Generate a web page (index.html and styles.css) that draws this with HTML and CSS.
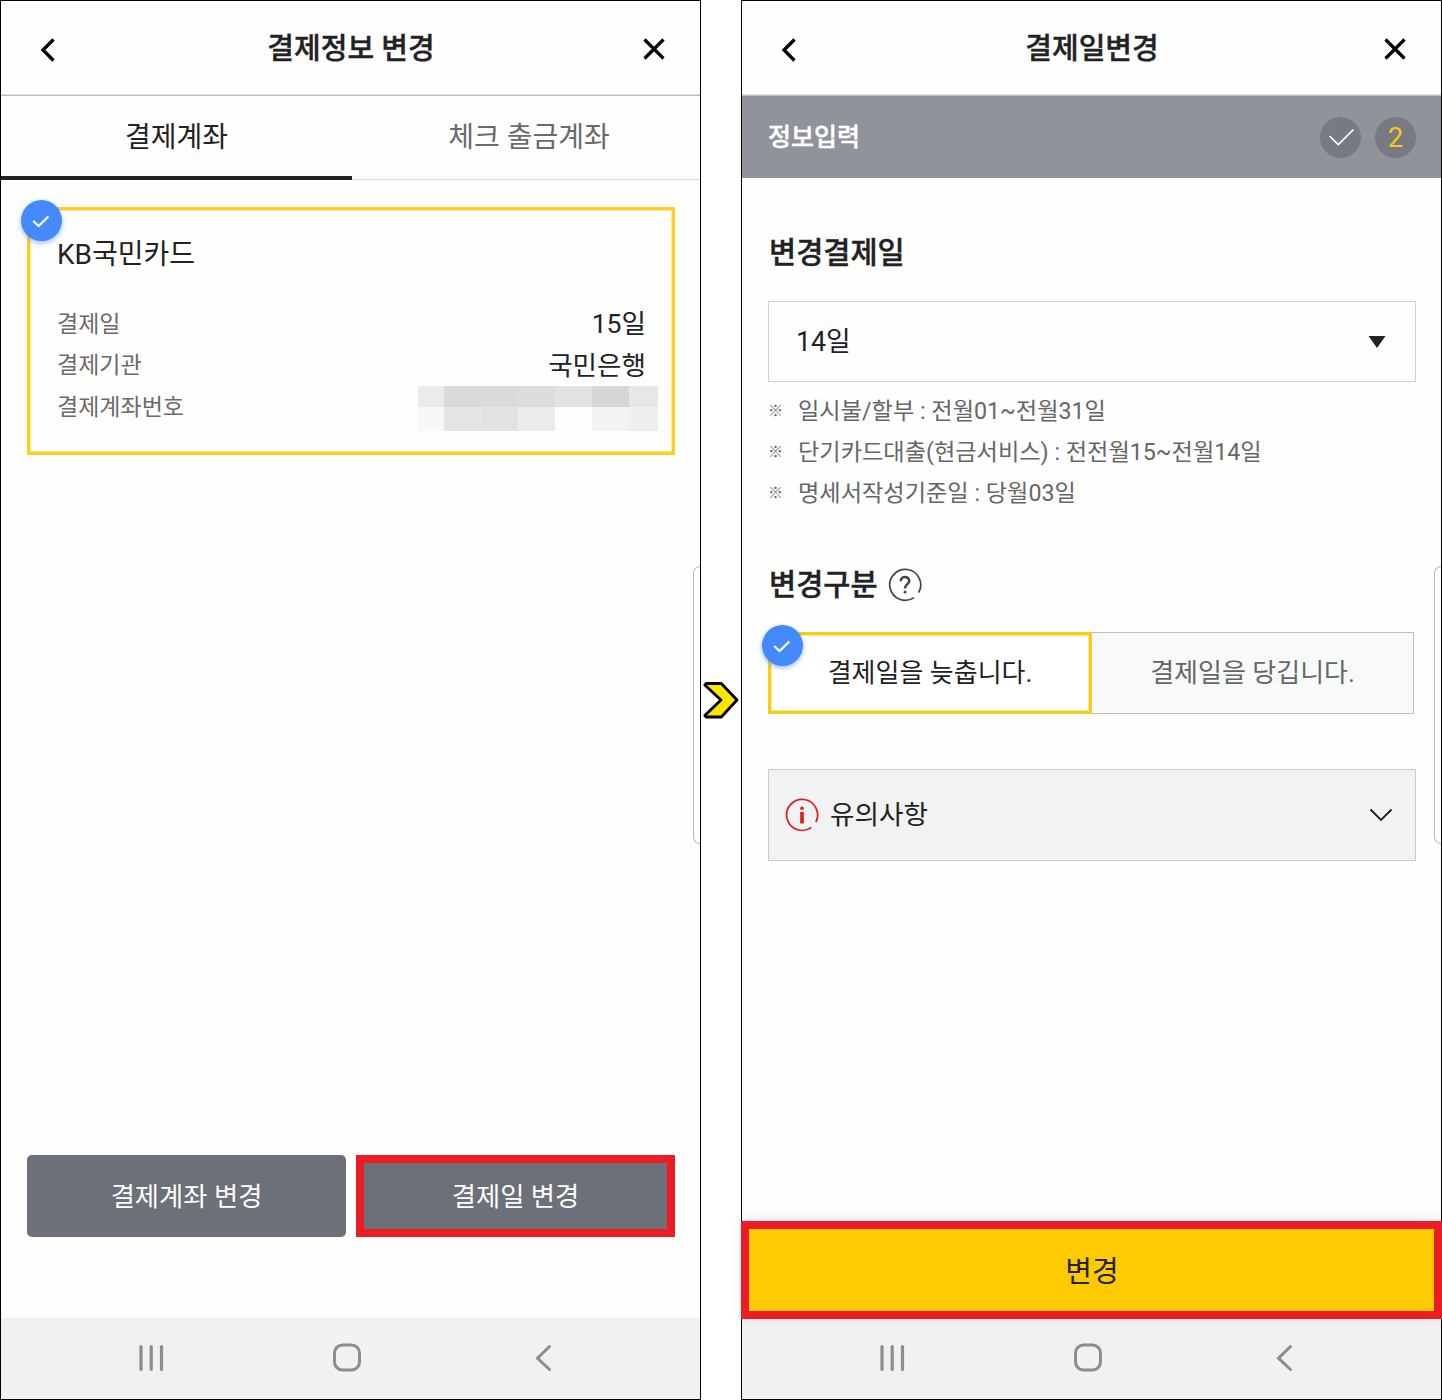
FILE: index.html
```html
<!DOCTYPE html>
<html lang="ko">
<head>
<meta charset="utf-8">
<title>결제정보 변경</title>
<link rel="stylesheet" href="styles.css">
</head>
<body>
<main class="guide">
  <section class="phone">
    <header class="topbar">
      <svg class="icon-back" viewBox="0 0 16 26"><path d="M13.500 2.500 3 13l10.500 10.500"/></svg>
      <h1 class="title">결제정보 변경</h1>
      <svg class="icon-close" viewBox="0 0 24 24"><path d="M2.500 2.500 21.500 21.500M21.500 2.500 2.500 21.500"/></svg>
    </header>
    <nav class="tabs">
      <div class="tab tab-active">결제계좌</div>
      <div class="tab">체크 출금계좌</div>
    </nav>
    <div class="body">
      <article class="card">
        <span class="badge"><svg viewBox="0 0 41 41"><path d="M12.200 21 17.600 26 27.400 16.500"/></svg></span>
        <h2 class="card-name">KB국민카드</h2>
        <div class="row"><span class="label">결제일</span><span class="value">15일</span></div>
        <div class="row"><span class="label">결제기관</span><span class="value">국민은행</span></div>
        <div class="row"><span class="label">결제계좌번호</span>
          <span class="mosaic">
            <i class="m1"></i><i class="m2"></i><i class="m3"></i><i class="m4"></i><i class="m5"></i><i class="m6"></i><i class="m7"></i>
            <i class="m8"></i><i class="m9"></i><i class="m10"></i><i class="m11"></i><i class="m12"></i><i class="m13"></i><i class="m14"></i>
          </span>
        </div>
      </article>
      <div class="actions">
        <div class="button">결제계좌 변경</div>
        <div class="button button-marked">결제일 변경</div>
      </div>
    </div>
    <footer class="sysnav">
      <svg viewBox="0 0 699 81"><path class="bars" d="M140 28.500v23M150.200 28.500v23M160.500 28.500v23"/><rect x="333.500" y="27" width="25" height="25" rx="8"/><path d="M548.500 28.500 536.500 40.200 548.500 51.500"/></svg>
    </footer>
    <span class="edge-handle"></span>
  </section>

  <div class="between">
    <svg class="arrow" viewBox="0 0 40 40"><path d="M5 3.500H20.300L36 20 20.300 37H5L3.800 35.500 20 20 3.800 5Z"/></svg>
  </div>

  <section class="phone">
    <header class="topbar">
      <svg class="icon-back" viewBox="0 0 16 26"><path d="M13.500 2.500 3 13l10.500 10.500"/></svg>
      <h1 class="title">결제일변경</h1>
      <svg class="icon-close" viewBox="0 0 24 24"><path d="M2.500 2.500 21.500 21.500M21.500 2.500 2.500 21.500"/></svg>
    </header>
    <div class="stepbar">
      <span class="step-name">정보입력</span>
      <span class="step"><svg viewBox="0 0 41 41"><path d="M9.500 19 18.300 27.500 33.500 12.500"/></svg></span>
      <span class="step">2</span>
    </div>
    <div class="form">
      <h2 class="heading">변경결제일</h2>
      <div class="select"><span>14일</span><svg viewBox="0 0 18 12"><path d="M0.500 0H17.500L9 12Z"/></svg></div>
      <ul class="notes">
        <li><span class="mark">※</span>일시불/할부 : 전월01~전월31일</li>
        <li><span class="mark">※</span>단기카드대출(현금서비스) : 전전월15~전월14일</li>
        <li><span class="mark">※</span>명세서작성기준일 : 당월03일</li>
      </ul>
      <div class="heading-row">
        <h2 class="heading">변경구분</h2>
        <svg class="help" viewBox="-17 -17 34 34"><path d="M9 12.600A15.500 15.500 0 1 1 13.700 7.500"/><path class="glyph" d="M-4.200-3.700C-4.200-9.500 4.200-9.500 4.200-3.900 4.200-1 0-0.500 0 3.600"/><circle cx="0" cy="7" r="1.500"/></svg>
      </div>
      <div class="options">
        <div class="option option-on"><span class="badge"><svg viewBox="0 0 41 41"><path d="M12.200 21 17.600 26 27.400 16.500"/></svg></span>결제일을 늦춥니다.</div>
        <div class="option">결제일을 당깁니다.</div>
      </div>
      <div class="notice">
        <svg class="info" viewBox="-17 -17 34 34"><path d="M9.300 12.400A15.500 15.500 0 1 1 13.900 7"/><circle cx="0" cy="-6.800" r="1.800"/><path class="stem" d="M0-3V8.500"/></svg>
        <span>유의사항</span>
        <svg class="chevron" viewBox="0 0 24 14"><path d="M1.500 1.500 12 12 22.500 1.500"/></svg>
      </div>
    </div>
    <div class="submit">변경</div>
    <footer class="sysnav">
      <svg viewBox="0 0 699 81"><path class="bars" d="M140 28.500v23M150.200 28.500v23M160.500 28.500v23"/><rect x="333.500" y="27" width="25" height="25" rx="8"/><path d="M548.500 28.500 536.500 40.200 548.500 51.500"/></svg>
    </footer>
    <span class="edge-handle"></span>
  </section>
</main>
</body>
</html>
```

FILE: styles.css
```css
* { box-sizing: border-box; }
body {
  margin: 0;
  background: #fff;
  color: #222;
  font-family: Roboto, "Noto Sans CJK KR", sans-serif;
}
h1, h2, ul { margin: 0; padding: 0; }
svg { display: block; fill: none; stroke: currentColor; }

.guide { display: flex; width: 1442px; height: 1400px; }
.phone {
  position: relative;
  display: flex;
  flex-direction: column;
  width: 701px;
  height: 1400px;
  border: 1px solid #000;
  background: #fefefe;
}
.between { display: flex; width: 40px; align-items: center; justify-content: center; }
.arrow { flex: none; width: 40px; height: 40px; fill: #ffe600; stroke: #000; stroke-width: 2.800; stroke-linejoin: round; }

/* top bar */
.topbar {
  display: grid;
  grid-template-columns: 58px 1fr 58px;
  align-items: center;
  height: 95px;
  border-bottom: 1px solid #bcbcbc;
  box-shadow: inset 0 -1px #dedede;
}
.icon-back { width: 16px; height: 26px; margin: 4px 0 0 39px; color: #000; stroke-width: 3.300; }
.icon-close { width: 24px; height: 24px; margin-top: 1px; color: #000; stroke-width: 3.200; }
.title { padding: 2px 0 0 1px; font-size: 29px; font-weight: 500; line-height: 40px; text-align: center; }
.title, .heading, .step-name { -webkit-text-stroke: 0.400px currentColor; }

/* tabs */
.tabs { display: flex; height: 84px; }
.tab {
  flex: 1;
  height: 84px;
  padding: 1px 0 0 6px;
  border-bottom: 1px solid #dcdcdc;
  color: #6a6a6a;
  font-size: 28px;
  line-height: 82px;
  text-align: center;
}
.tab-active { flex: 0 0 351px; padding-left: 0; border-bottom: 4px solid #222; color: #222; }

/* selected card */
.body { display: flex; flex: 1; flex-direction: column; justify-content: space-between; padding: 27px 25px 81px 26px; }
.card {
  position: relative;
  height: 248px;
  padding: 25px 26px 0 27px;
  border: 3px solid #fccf22;
  box-shadow: inset 0 0 0 1px #fde990;
}
.card-name { margin-bottom: 26px; font-size: 28px; font-weight: 400; line-height: 40px; }
.row { display: flex; align-items: center; justify-content: space-between; height: 41.500px; }
.label { color: #6b6b6b; font-size: 23px; }
.value { font-size: 26.600px; }
.mosaic {
  display: grid;
  grid-template-columns: 26px repeat(5, 37px) 29px;
  grid-template-rows: 21px 24px;
  margin: 8px -12px 0 0;
}
.m1 { background: #ebebeb; } .m2 { background: #d9d9d9; } .m3 { background: #dadada; }
.m4 { background: #ddd; } .m5 { background: #e2e2e2; } .m6 { background: #d6d6d6; }
.m7 { background: #e7e7e7; } .m8 { background: #f8f8f8; } .m9 { background: #e5e5e5; }
.m10 { background: #e3e3e3; } .m11 { background: #ebebeb; } .m12 { background: #fdfdfd; }
.m13 { background: #f3f3f3; } .m14 { background: #efefef; }

.badge {
  position: absolute;
  top: -10px;
  left: -9px;
  width: 41px;
  height: 41px;
  border-radius: 50%;
  background: #4489fe;
  box-shadow: 0 2px 5px rgba(68, 137, 254, 0.550);
  color: #fff;
}
.badge svg { stroke-width: 2.200; }

.actions { display: grid; grid-template-columns: 319px 319px; gap: 10px; }
.button {
  display: flex;
  align-items: center;
  justify-content: center;
  height: 82px;
  padding-bottom: 4px;
  border-radius: 5px;
  background: #6c7079;
  color: #fff;
  font-size: 26.300px;
}
.button-marked { border: 8px solid #ed1c24; border-radius: 0; }

/* step bar */
.stepbar { display: flex; align-items: center; height: 82px; padding: 0 25px 0 26px; background: #90939c; color: #fff; }
.step-name { flex: 1; padding-bottom: 4px; font-size: 25px; font-weight: 500; }
.step {
  width: 41px;
  height: 41px;
  margin-left: 14px;
  border-radius: 50%;
  background: #777a81;
  color: #f7c81c;
  font-size: 27.500px;
  line-height: 41px;
  text-align: center;
}
.step svg { color: #fff; stroke-width: 1.700; }

/* form */
.form { flex: 1; padding: 53px 26px 0; }
.heading { padding-left: 1px; font-size: 29.500px; font-weight: 500; line-height: 44px; }
.select {
  display: flex;
  align-items: center;
  justify-content: space-between;
  width: 648px;
  height: 81px;
  margin-top: 26px;
  padding: 0 29px 5px 27px;
  border: 1px solid #d0d0d0;
  font-size: 26.800px;
}
.select svg { width: 18px; height: 12px; margin-top: 5px; fill: #222; stroke: none; }
.notes { margin-top: 9px; color: #666; font-size: 23.200px; line-height: 41px; list-style: none; }
.notes li { display: flex; }
.mark { width: 30px; font-size: 15px; font-weight: 700; }
.heading-row { display: flex; align-items: center; gap: 10px; margin-top: 49px; }
.help { width: 34px; height: 34px; color: #444; stroke-width: 1.700; }
.help .glyph { stroke-width: 2.500; }
.help circle { fill: #444; stroke: none; }
.options { display: flex; width: 646px; margin-top: 25px; }
.option {
  position: relative;
  display: flex;
  flex: 1;
  align-items: center;
  justify-content: center;
  height: 82px;
  padding-bottom: 5px;
  border: 1px solid #bcbcbc;
  border-left: 0;
  background: #f8faf9;
  color: #666;
  font-size: 26px;
}
.option-on { flex: 0 0 324px; border: 3px solid #f8cc1c; box-shadow: inset 0 0 0 1px #fde990; background: #fff; color: #222; }
.notice {
  display: flex;
  align-items: center;
  width: 648px;
  height: 92px;
  margin-top: 55px;
  padding: 0 22px 5px 16px;
  border: 1px solid #cbcccd;
  background: #f1f2f4;
  font-size: 26.600px;
}
.info { width: 34px; height: 34px; margin: 5px 11px 0 0; color: #e3181c; stroke-width: 1.700; }
.info circle { fill: #e3181c; stroke: none; }
.info .stem { stroke-width: 3.600; }
.chevron { width: 24px; height: 14px; margin: 4px 0 0 auto; stroke-width: 1.900; }

.submit {
  display: flex;
  align-items: center;
  justify-content: center;
  height: 98px;
  margin: 0 -1px -1px;
  padding: 0 0 3px 1px;
  border: 8px solid #ed1c24;
  background: #ffcb00;
  box-shadow: 0 -2px 12px rgba(0, 0, 0, 0.080);
  font-size: 29px;
  z-index: 1;
}

/* system navigation */
.sysnav { height: 81px; background: #f1f1f1; color: #8d8d8d; }
.sysnav svg { width: 699px; height: 81px; stroke-width: 3; stroke-linecap: round; }
.sysnav .bars { stroke-width: 3.200; }
.edge-handle {
  position: absolute;
  top: 565px;
  right: 0;
  width: 7px;
  height: 278px;
  border: 1px solid #bbb;
  border-right: 0;
  border-radius: 9px 0 0 9px;
  background: #fff;
}
```
